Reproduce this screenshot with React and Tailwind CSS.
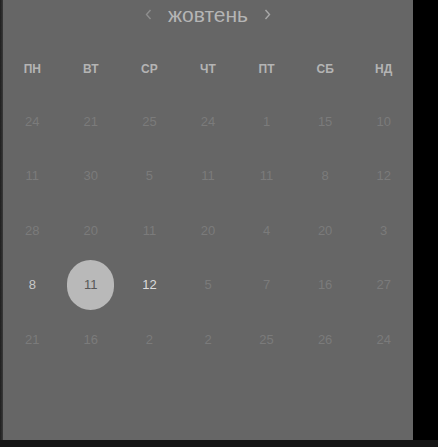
const weekdays = ["ПН", "ВТ", "СР", "ЧТ", "ПТ", "СБ", "НД"];

const weeks = [
  ["24", "21", "25", "24", "1", "15", "10"],
  ["11", "30", "5", "11", "11", "8", "12"],
  ["28", "20", "11", "20", "4", "20", "3"],
  ["8", "11", "12", "5", "7", "16", "27"],
  ["21", "16", "2", "2", "25", "26", "24"],
];

function Chevron({ dir, className }) {
  return (
    <svg width="7" height="11" viewBox="0 0 7 11" className={className}>
      <path
        d={dir === "left" ? "M5.5 1 L1.5 5.5 L5.5 10" : "M1.5 1 L5.5 5.5 L1.5 10"}
        fill="none"
        stroke="currentColor"
        strokeWidth="1.4"
      />
    </svg>
  );
}

function Day({ value, week, idx }) {
  const selected = week === 3 && idx === 1;
  const bright = week === 3 && (idx === 0 || idx === 2);
  if (selected) {
    return (
      <div className="flex h-[50px] w-[47px] items-center justify-center rounded-full bg-[#b9b9b9] text-[#575757]">
        {value}
      </div>
    );
  }
  return (
    <span className={bright ? (idx === 0 ? "text-[#c8c8c8]" : "text-[#dcdcdc]") : "text-[#7b7b7b]"}>
      {value}
    </span>
  );
}

export default function App() {
  return (
    <div
      className="flex h-[447px] w-[438px] flex-col bg-black"
      style={{ fontFamily: '"Liberation Sans", Arial, sans-serif' }}
    >
      <div className="flex h-[440px]">
        <div className="w-[3px] bg-gradient-to-r from-[#1e1e1e] to-[#3a3a3a]" />
        <div className="flex w-[410px] flex-col bg-[#666666]">
          <div className="flex h-[28px] items-center justify-center gap-4">
            <Chevron dir="left" className="text-[#8e8e8e]" />
            <span className="text-[21px] leading-none text-[#b5b5b5]">жовтень</span>
            <Chevron dir="right" className="text-[#a8a8a8]" />
          </div>
          <div className="mt-[27px] grid h-[28px] grid-cols-7 items-center text-center text-[12px] font-bold text-[#b4b4b4]">
            {weekdays.map((d) => (
              <span key={d}>{d}</span>
            ))}
          </div>
          <div className="mt-[11px] flex flex-col">
            {weeks.map((row, w) => (
              <div key={w} className="grid h-[54.5px] grid-cols-7 items-center text-[13px]">
                {row.map((v, i) => (
                  <div key={i} className="flex justify-center">
                    <Day value={v} week={w} idx={i} />
                  </div>
                ))}
              </div>
            ))}
          </div>
        </div>
        <div className="flex-1 bg-black" />
      </div>
      <div className="h-[7px] bg-[#151515]" />
    </div>
  );
}
